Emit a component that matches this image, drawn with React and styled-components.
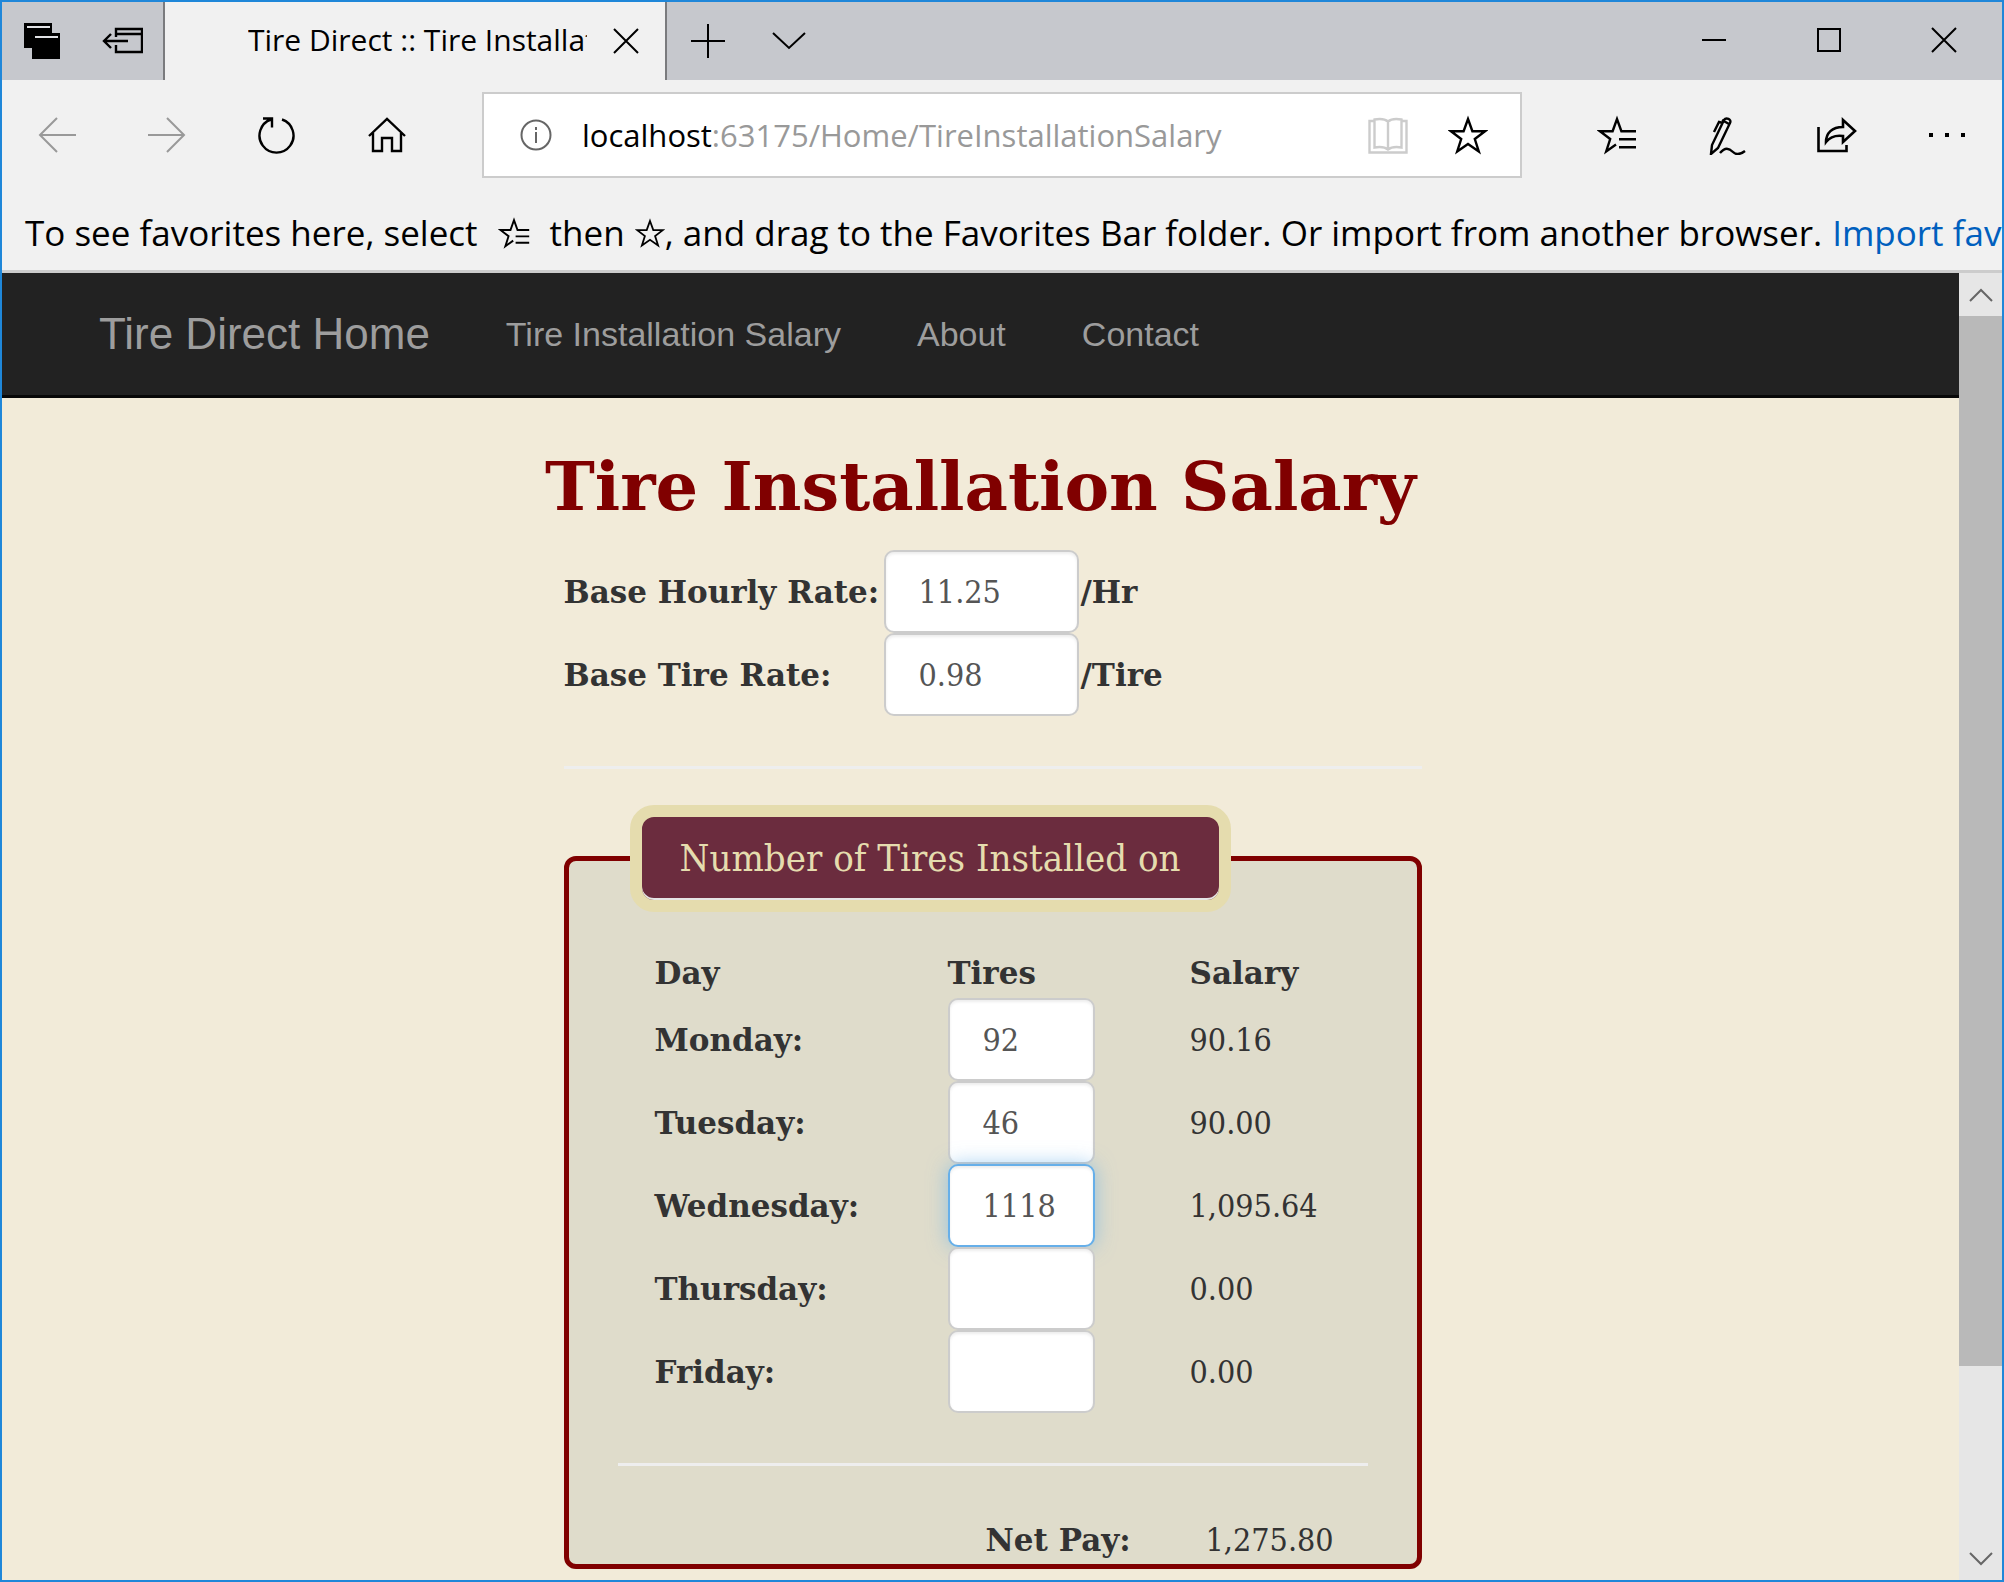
import React, { useState } from "react";
import styled, { createGlobalStyle } from "styled-components";

const serif = `"DejaVu Serif Condensed", "DejaVu Serif", serif`;
const wideSerif = `"DejaVu Serif", serif`;

const GlobalStyle = createGlobalStyle`
  * {
    box-sizing: border-box;
  }
  body {
    margin: 0;
    background: #f2ebd9;
  }
  button {
    font: inherit;
    border: 0;
    padding: 0;
    background: none;
  }
  svg {
    flex-shrink: 0;
  }
`;

const Window = styled.div`
  display: flex;
  flex-direction: column;
  min-height: 100vh;
  border: 2px solid #1f87d9;
  background: #f1f1f1;
  color: #000;
  font-family: "Open Sans", sans-serif;
`;

const TabStrip = styled.header`
  display: flex;
  height: 78px;
  background: #c6c8cd;
`;

const TabTools = styled.div`
  display: flex;
  width: 163px;
  border-right: 2px solid #7a7b7e;
`;

const StripButton = styled.button`
  display: flex;
  align-items: center;
  justify-content: center;
  width: ${props => props.$width}px;
`;

const Tab = styled.div`
  display: flex;
  align-items: center;
  width: 502px;
  padding-left: 83px;
  border-right: 2px solid #7a7b7e;
  background: #f1f1f1;
`;

const TabTitle = styled.span`
  width: 339px;
  padding-bottom: 2px;
  overflow: hidden;
  white-space: nowrap;
  font-size: 30px;
  line-height: 40px;
`;

const WindowButtons = styled.div`
  display: flex;
  height: 76px;
  margin-left: auto;
`;

const Toolbar = styled.nav`
  display: flex;
  align-items: center;
  height: 110px;
`;

const ToolButton = styled.button`
  display: flex;
  align-items: center;
  justify-content: center;
  width: 110px;
  height: 86px;
`;

const AddressBar = styled.div`
  display: flex;
  flex: 1;
  align-items: center;
  height: 86px;
  margin: 0 40px;
  padding: 0 32px 0 36px;
  border: 2px solid #ccc;
  background: #fff;
`;

const Url = styled.div`
  flex: 1;
  margin-left: 30px;
  color: #999;
  font-size: 31px;
  line-height: 48px;
  white-space: nowrap;
`;

const Host = styled.span`
  color: #000;
`;

const AddressButton = styled.button`
  display: flex;
  margin-left: 40px;
`;

const FavoritesBar = styled.div`
  display: flex;
  align-items: center;
  gap: 10px;
  height: 83px;
  padding: 6px 0 0 23px;
  overflow: hidden;
  border-bottom: 3px solid #ccc;
  font-size: 35px;
  line-height: 48px;
  white-space: nowrap;
`;

const ListHint = styled.span`
  display: flex;
  margin: 0 10px;
`;

const StarHint = styled.span`
  display: flex;
  align-items: center;
`;

const ImportLink = styled.a`
  color: #005fbe;
  text-decoration: none;
`;

const View = styled.div`
  display: flex;
  flex: 1;
`;

const Page = styled.div`
  flex: 1;
  min-width: 0;
  background: #f2ebd9;
  color: #333;
  font-family: ${serif};
  font-size: 32px;
`;

const Scrollbar = styled.div`
  display: flex;
  flex-direction: column;
  width: 43px;
  background: #e6e6e6;
`;

const ScrollButton = styled.button`
  display: flex;
  align-items: center;
  justify-content: center;
  height: 43px;
`;

const ScrollTrack = styled.div`
  flex: 1;
`;

const ScrollThumb = styled.div`
  height: 86%;
  background: #b9b9b9;
`;

const NavBar = styled.nav`
  display: flex;
  align-items: center;
  gap: 76px;
  height: 125px;
  padding-left: 97px;
  border-bottom: 3px solid #080808;
  background: #222;
  font-family: "Liberation Sans", sans-serif;
`;

const NavLink = styled.a`
  color: #9d9d9d;
  font-size: 34px;
  text-decoration: none;
`;

const Brand = styled(NavLink)`
  font-size: 44px;
`;

const Content = styled.main`
  width: 882px;
  margin: 0 auto;
  padding: 48px 0 11px;
`;

const Title = styled.h1`
  margin: 0 0 22px;
  color: #800000;
  font-family: ${wideSerif};
  font-size: 67px;
  line-height: 82px;
  text-align: center;
  white-space: nowrap;
`;

const Form = styled.form`
  width: 858px;
  margin-left: auto;
`;

const BoldText = styled.span`
  font-family: ${wideSerif};
  font-size: 31px;
  font-weight: bold;
  white-space: nowrap;
`;

const RateRow = styled.div`
  display: grid;
  grid-template-columns: 320px 195px auto;
  align-items: center;
  height: 83px;
`;

const Field = styled.input`
  display: block;
  width: ${props => props.$width}px;
  height: 83px;
  padding: 0 33px;
  border: 2px solid ${props => (props.$active ? "#66afe9" : "#ccc")};
  border-radius: 10px;
  outline: 0;
  background: #fff;
  box-shadow: inset 0 2px 3px rgba(0, 0, 0, 0.075)
    ${props => props.$active && ", 0 0 20px rgba(102, 175, 233, 0.6)"};
  color: #555;
  font: inherit;
`;

const Unit = styled(BoldText)`
  margin-left: 2px;
`;

const Rule = styled.hr`
  height: 3px;
  margin: 50px 0 ${props => props.$below}px;
  border: 0;
  background: #eee;
`;

const DayBox = styled.fieldset`
  margin: 0;
  padding: 36px 49px 0;
  border: 5px solid #800000;
  border-radius: 12px;
  background: #dfdccb;
`;

const Legend = styled.legend`
  margin-left: 12px;
  padding: 0 38px;
  border: 12px solid #e5dcae;
  border-radius: 24px;
  background: #6b2c3e;
  box-shadow: inset 0 -2px #e5e5e5;
  color: #e5dcae;
  font-size: 38px;
  line-height: 83px;
  white-space: nowrap;
`;

const DayTable = styled.table`
  width: 100%;
  table-layout: fixed;
  border-collapse: collapse;
`;

const Cell = styled.td`
  width: ${props => props.$width}px;
  height: 83px;
  padding: 0 0 0 ${props => props.$indent || 0}px;
  text-align: left;
`;

const HeadCell = styled(Cell)`
  height: 50px;
`;

const NetPay = styled.div`
  display: grid;
  grid-template-columns: 220px auto;
  padding-left: 368px;
  line-height: 48px;
`;

const Svg = ({ w, h, stroke = "#000", width = 2, children }) => (
  <svg
    width={w}
    height={h}
    viewBox={`0 0 ${w} ${h}`}
    fill="none"
    stroke={stroke}
    strokeWidth={width}
    aria-hidden="true"
  >
    {children}
  </svg>
);

const Cross = () => (
  <Svg w={26} h={26}>
    <path d="M1 1l24 24M25 1L1 25" />
  </Svg>
);

const StarShape = ({ size = 40, d }) => (
  <svg
    width={size}
    height={size}
    viewBox="0 0 40 40"
    fill="none"
    stroke="#000"
    strokeWidth="2.4"
    aria-hidden="true"
  >
    <path d={d} />
  </svg>
);

const Star = ({ size }) => (
  <StarShape
    size={size}
    d="M20 4l4.4 12.2H37L26.8 24l4 12.500L20 29l-10.800 7.500 4-12.500L3 16.200h12.600z"
  />
);

const StarList = ({ size }) => (
  <StarShape
    size={size}
    d="M39 16.200H24.400L20 4l-4.400 12.200H3L13.200 24l-4 12.500L19 29.500M22 24.200h17M22 32.200h17"
  />
);

const App = () => {
  const [rates, setRates] = useState({ hourly: "11.25", tire: "0.98" });
  const [days, setDays] = useState([
    { name: "Monday", tires: "92", salary: "90.16" },
    { name: "Tuesday", tires: "46", salary: "90.00" },
    { name: "Wednesday", tires: "1118", salary: "1,095.64", active: true },
    { name: "Thursday", tires: "", salary: "0.00" },
    { name: "Friday", tires: "", salary: "0.00" }
  ]);

  const onRateChange = e =>
    setRates({ ...rates, [e.target.name]: e.target.value });

  const onTiresChange = e =>
    setDays(
      days.map(day =>
        day.name === e.target.name ? { ...day, tires: e.target.value } : day
      )
    );

  return (
    <Window>
      <GlobalStyle />
      <TabStrip>
        <TabTools>
          <StripButton $width={80} aria-label="Tabs you've set aside">
            <Svg w={36} h={36}>
              <path d="M1 1h26v23H1z" fill="#000" />
              <path d="M3 4h23" stroke="#e0e1e4" />
              <path d="M9 11h26v24H9z" fill="#000" />
              <path d="M11 14h23" stroke="#e0e1e4" />
            </Svg>
          </StripButton>
          <StripButton $width={80} aria-label="Set these tabs aside">
            <Svg w={41} h={28} width={2.4}>
              <path d="M14 10V2h26v23H14v-7M14 7h26M2 14h24M9 7l-7 7 7 7" />
            </Svg>
          </StripButton>
        </TabTools>
        <Tab>
          <TabTitle>Tire Direct :: Tire Installation Salary</TabTitle>
          <StripButton $width={77} aria-label="Close tab">
            <Cross />
          </StripButton>
        </Tab>
        <StripButton $width={82} aria-label="New tab">
          <Svg w={34} h={34}>
            <path d="M17 0v34M0 17h34" />
          </Svg>
        </StripButton>
        <StripButton $width={80} aria-label="Tab previews">
          <Svg w={34} h={18}>
            <path d="M1 1l16 15L33 1" />
          </Svg>
        </StripButton>
        <WindowButtons>
          <StripButton $width={115} aria-label="Minimize">
            <Svg w={24} h={4}>
              <path d="M0 2h24" />
            </Svg>
          </StripButton>
          <StripButton $width={115} aria-label="Maximize">
            <Svg w={24} h={24}>
              <path d="M1 1h22v22H1z" />
            </Svg>
          </StripButton>
          <StripButton $width={116} aria-label="Close">
            <Cross />
          </StripButton>
        </WindowButtons>
      </TabStrip>

      <Toolbar>
        <ToolButton aria-label="Back">
          <Svg w={38} h={36} stroke="#999">
            <path d="M38 18H2M19 1L2 18l17 17" />
          </Svg>
        </ToolButton>
        <ToolButton aria-label="Forward">
          <Svg w={38} h={36} stroke="#999">
            <path d="M0 18h36M19 1l17 17-17 17" />
          </Svg>
        </ToolButton>
        <ToolButton aria-label="Refresh">
          <Svg w={38} h={38} width={2.4}>
            <path d="M24 3.500A17 17 0 1 1 13 3.500M5 2.500h9v9" />
          </Svg>
        </ToolButton>
        <ToolButton aria-label="Home">
          <Svg w={38} h={36} width={2.4}>
            <path d="M1 19L19 2l18 17M5 16v18h9V21h10v13h9V16" />
          </Svg>
        </ToolButton>
        <AddressBar>
          <Svg w={32} h={32} stroke="#666">
            <circle cx="16" cy="16" r="14.5" />
            <path d="M16 13v11M16 8v3" />
          </Svg>
          <Url role="textbox" aria-label="Address">
            <Host>localhost</Host>:63175/Home/TireInstallationSalary
          </Url>
          <AddressButton aria-label="Reading view">
            <Svg w={40} h={37} stroke="#ccc" width={2.4}>
              <path d="M6.500 4H1.500V35.500h37V4h-5M20 4.500c-3-2.500-8-3-13.500-2v28c5-.8 10-.8 13.500 2 3.500-2.800 8.500-2.800 13.500-2v-28c-5.500-1-10.500-.5-13.500 2zv28" />
            </Svg>
          </AddressButton>
          <AddressButton aria-label="Add to favorites">
            <Star />
          </AddressButton>
        </AddressBar>
        <ToolButton aria-label="Favorites">
          <StarList />
        </ToolButton>
        <ToolButton aria-label="Add notes">
          <Svg w={37} h={39} width={2.4}>
            <path d="M2 38l1-9L15 4c2-3 8-1 6 3L9 32zM5 16l5-10 4 1M13 4l7 4M11 37c5-6 9-5 13-1s8 2 12-1" />
          </Svg>
        </ToolButton>
        <ToolButton aria-label="Share">
          <Svg w={40} h={36} width={2.6}>
            <path d="M1.500 10v24h28v-6M9 25c0-9 6-15 17-15V3l12 11-12 11v-6c-7-1-13 1-17 6z" />
          </Svg>
        </ToolButton>
        <ToolButton aria-label="Settings and more">
          <Svg w={38} h={6}>
            <path d="M3 1v4M19 1v4M35 1v4" strokeWidth="4" />
          </Svg>
        </ToolButton>
      </Toolbar>

      <FavoritesBar>
        <span>To see favorites here, select</span>
        <ListHint>
          <StarList size={32} />
        </ListHint>
        <span>then</span>
        <StarHint>
          <Star size={30} />
          <span>, and drag to the Favorites Bar folder. Or import from another browser.</span>
        </StarHint>
        <ImportLink href="#import">Import favorites</ImportLink>
      </FavoritesBar>

      <View>
        <Page>
          <NavBar>
            <Brand href="#home">Tire Direct Home</Brand>
            <NavLink href="#salary">Tire Installation Salary</NavLink>
            <NavLink href="#about">About</NavLink>
            <NavLink href="#contact">Contact</NavLink>
          </NavBar>
          <Content>
            <Title>Tire Installation Salary</Title>
            <Form>
              <RateRow>
                <BoldText as="label" htmlFor="hourly">
                  Base Hourly Rate:
                </BoldText>
                <Field
                  id="hourly"
                  name="hourly"
                  $width={195}
                  value={rates.hourly}
                  onChange={onRateChange}
                />
                <Unit>/Hr</Unit>
              </RateRow>
              <RateRow>
                <BoldText as="label" htmlFor="tire">
                  Base Tire Rate:
                </BoldText>
                <Field
                  id="tire"
                  name="tire"
                  $width={195}
                  value={rates.tire}
                  onChange={onRateChange}
                />
                <Unit>/Tire</Unit>
              </RateRow>
              <Rule $below={36} />
              <DayBox>
                <Legend>Number of Tires Installed on</Legend>
                <DayTable>
                  <thead>
                    <tr>
                      <HeadCell as="th" $width={330} $indent={37}>
                        <BoldText>Day</BoldText>
                      </HeadCell>
                      <HeadCell as="th" $width={242}>
                        <BoldText>Tires</BoldText>
                      </HeadCell>
                      <HeadCell as="th" $width={178}>
                        <BoldText>Salary</BoldText>
                      </HeadCell>
                    </tr>
                  </thead>
                  <tbody>
                    {days.map(day => (
                      <tr key={day.name}>
                        <Cell as="th" $indent={37}>
                          <BoldText as="label" htmlFor={day.name}>
                            {day.name}:
                          </BoldText>
                        </Cell>
                        <Cell>
                          <Field
                            id={day.name}
                            name={day.name}
                            $width={147}
                            $active={day.active}
                            value={day.tires}
                            onChange={onTiresChange}
                          />
                        </Cell>
                        <Cell>{day.salary}</Cell>
                      </tr>
                    ))}
                  </tbody>
                </DayTable>
                <Rule $below={50} />
                <NetPay>
                  <BoldText>Net Pay:</BoldText>
                  <span>1,275.80</span>
                </NetPay>
              </DayBox>
            </Form>
          </Content>
        </Page>
        <Scrollbar>
          <ScrollButton aria-label="Scroll up">
            <Svg w={24} h={14} stroke="#666">
              <path d="M1 13L12 2l11 11" />
            </Svg>
          </ScrollButton>
          <ScrollTrack>
            <ScrollThumb />
          </ScrollTrack>
          <ScrollButton aria-label="Scroll down">
            <Svg w={24} h={14} stroke="#666">
              <path d="M1 1l11 11L23 1" />
            </Svg>
          </ScrollButton>
        </Scrollbar>
      </View>
    </Window>
  );
};

export default App;
